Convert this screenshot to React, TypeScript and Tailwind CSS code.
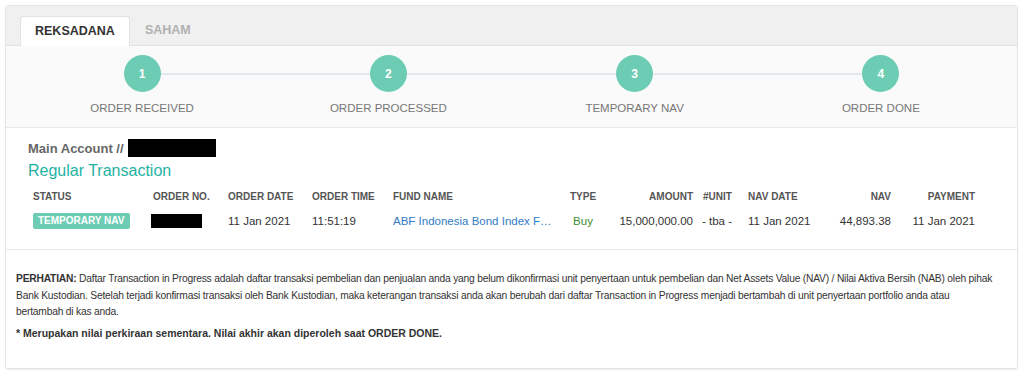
export default function App() {
  const steps = ['ORDER RECEIVED', 'ORDER PROCESSED', 'TEMPORARY NAV', 'ORDER DONE']

  return (
    <div className="min-h-[375px] bg-white p-[5px] font-['Liberation_Sans',Arial,sans-serif]">
      <div className="overflow-hidden rounded-[3px] border border-[#e1e5e8] shadow-[0_1px_1px_rgba(0,0,0,0.08)]">
        {/* Tabs */}
        <div className="flex h-[40px] items-end border-b border-[#dde3e6] bg-[#f0f0f0] pl-[14px]">
          <div className="-mb-px flex h-[30px] items-center rounded-t-[3px] border border-b-0 border-[#dde3e6] bg-white px-[14px] text-[12.5px] font-bold text-[#333]">
            REKSADANA
          </div>
          <div className="flex h-[30px] items-center px-[15px] text-[12.5px] font-bold text-[#b0b0b0]">
            SAHAM
          </div>
        </div>

        {/* Stepper */}
        <div className="border-b border-[#e6eaed] bg-[#fafafa] px-[13px] pt-[9px] pb-[10px]">
          <div className="relative flex">
            <div className="absolute top-[18px] right-[12.5%] left-[12.5%] h-[2px] bg-[#e3e8ec]"></div>
            {steps.map((label, i) => (
              <div key={label} className="relative flex flex-1 flex-col items-center">
                <div className="flex h-[37px] w-[37px] items-center justify-center rounded-full bg-[#6dcdb4] text-[12px] font-bold text-white">
                  {i + 1}
                </div>
                <div className="mt-[8px] text-[11.5px] text-[#777]">{label}</div>
              </div>
            ))}
          </div>
        </div>

        {/* Transactions */}
        <div className="border-b border-[#e6eaed] bg-white px-[22px] pt-[11px] pb-[16px]">
          <div className="flex h-[18px] items-center text-[13px] font-bold text-[#666]">
            Main Account //
            <span className="ml-[4px] inline-block h-[18px] w-[88px] bg-black"></span>
          </div>
          <div className="mt-[2px] text-[16px] leading-[24px] text-[#1fb3a4]">Regular Transaction</div>

          <table className="mt-[3px] w-[952px] table-fixed border-collapse text-left">
            <colgroup>
              <col className="w-[120px]" />
              <col className="w-[75px]" />
              <col className="w-[84px]" />
              <col className="w-[81px]" />
              <col className="w-[176px]" />
              <col className="w-[38px]" />
              <col className="w-[96px]" />
              <col className="w-[45px]" />
              <col className="w-[77px]" />
              <col className="w-[76px]" />
              <col className="w-[84px]" />
            </colgroup>
            <thead>
              <tr className="text-[10px] leading-[14px] font-bold text-[#555]">
                <th className="px-[5px] py-[4px]">STATUS</th>
                <th className="px-[5px] py-[4px]">ORDER NO.</th>
                <th className="px-[5px] py-[4px]">ORDER DATE</th>
                <th className="px-[5px] py-[4px]">ORDER TIME</th>
                <th className="px-[5px] py-[4px]">FUND NAME</th>
                <th className="px-[0px] py-[4px] text-center">TYPE</th>
                <th className="px-[5px] py-[4px] text-right">AMOUNT</th>
                <th className="px-[5px] py-[4px]">#UNIT</th>
                <th className="px-[5px] py-[4px]">NAV DATE</th>
                <th className="px-[5px] py-[4px] text-right">NAV</th>
                <th className="px-[5px] py-[4px] text-right">PAYMENT</th>
              </tr>
            </thead>
            <tbody>
              <tr className="h-[24px] text-[11.5px] leading-[16px] text-[#333]">
                <td className="px-[5px] py-[4px]">
                  <span className="inline-block rounded-[2px] bg-[#6dcdb4] px-[5px] text-[10px] leading-[16px] font-bold text-white">
                    TEMPORARY NAV
                  </span>
                </td>
                <td className="px-[3px] py-[4px]">
                  <span className="block h-[14px] w-[51px] bg-black"></span>
                </td>
                <td className="px-[5px] py-[4px]">11 Jan 2021</td>
                <td className="px-[5px] py-[4px]">11:51:19</td>
                <td className="truncate py-[4px] pr-[10px] pl-[5px] text-[#2f7bc4]">
                  ABF Indonesia Bond Index Fund
                </td>
                <td className="px-[0px] py-[4px] text-center text-[#3d8b2f]">Buy</td>
                <td className="px-[5px] py-[4px] text-right">15,000,000.00</td>
                <td className="px-[4px] py-[4px]">- tba -</td>
                <td className="px-[5px] py-[4px]">11 Jan 2021</td>
                <td className="px-[5px] py-[4px] text-right">44,893.38</td>
                <td className="px-[5px] py-[4px] text-right">11 Jan 2021</td>
              </tr>
            </tbody>
          </table>
        </div>

        {/* Notes */}
        <div className="bg-white pt-[21px] pr-[6px] pb-[27px] pl-[10px] text-[#333]">
          <p className="text-[10.25px] leading-[16.5px] tracking-[-0.2px]">
            <span className="font-bold">PERHATIAN:</span> Daftar Transaction in Progress adalah daftar
            transaksi pembelian dan penjualan anda yang belum dikonfirmasi unit penyertaan untuk pembelian
            dan Net Assets Value (NAV) / Nilai Aktiva Bersih (NAB) oleh pihak
            <br />
            Bank Kustodian. Setelah terjadi konfirmasi transaksi oleh Bank Kustodian, maka keterangan
            transaksi anda akan berubah dari daftar Transaction in Progress menjadi bertambah di unit
            penyertaan portfolio anda atau
            <br />
            bertambah di kas anda.
          </p>
          <p className="mt-[4px] text-[10.5px] leading-[16.5px] font-bold">
            * Merupakan nilai perkiraan sementara. Nilai akhir akan diperoleh saat ORDER DONE.
          </p>
        </div>
      </div>
    </div>
  )
}
